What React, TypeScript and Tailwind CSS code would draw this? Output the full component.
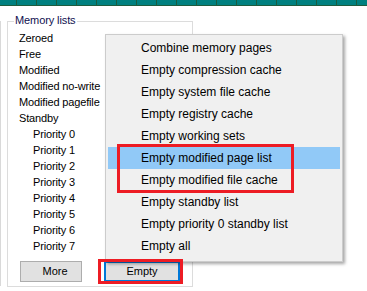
import React from "react";

const leftItems: { label: string; indent?: boolean }[] = [
  { label: "Zeroed" },
  { label: "Free" },
  { label: "Modified" },
  { label: "Modified no-write" },
  { label: "Modified pagefile" },
  { label: "Standby" },
  { label: "Priority 0", indent: true },
  { label: "Priority 1", indent: true },
  { label: "Priority 2", indent: true },
  { label: "Priority 3", indent: true },
  { label: "Priority 4", indent: true },
  { label: "Priority 5", indent: true },
  { label: "Priority 6", indent: true },
  { label: "Priority 7", indent: true },
];

const menuItems = [
  "Combine memory pages",
  "Empty compression cache",
  "Empty system file cache",
  "Empty registry cache",
  "Empty working sets",
  "Empty modified page list",
  "Empty modified file cache",
  "Empty standby list",
  "Empty priority 0 standby list",
  "Empty all",
];

export default function App() {
  const cells = Array.from({ length: 18 });
  return (
    <div className="relative w-[367px] h-[291px] overflow-hidden bg-white font-['Liberation_Sans',Arial,sans-serif] text-black">
      {/* top teal strip */}
      <div className="flex h-[6px] bg-[#008080] border-b border-[#1d5c3e]">
        <div className="w-[17px] h-full shrink-0 border-r border-[#1d5c3e]" />
        {cells.map((_, i) => (
          <div key={i} className="w-[20px] h-full shrink-0 border-r border-[#1d5c3e]" />
        ))}
      </div>

      <div className="flex pt-[15px]">
        <div className="w-px h-[265px] bg-[#d9d9d9]" />
        <div className="relative ml-[6px] w-[186px] h-[266px] border border-[#dcdcdc]">
          <span className="absolute -top-[9px] left-[6px] bg-white px-px text-[11px] leading-[14px] tracking-[-0.1px] text-[#101050]">
            Memory lists
          </span>
          <div className="pt-[8px] pl-[11px] text-[11px] leading-[16px] tracking-[-0.15px]">
            {leftItems.map((it) => (
              <div key={it.label} className={it.indent ? "pl-[14px]" : ""}>
                {it.label}
              </div>
            ))}
          </div>
          <div className="flex mt-[7px] pl-[12px]">
            <div className="flex items-center justify-center pl-[8px] w-[62px] h-[21px] border border-[#adadad] bg-[#e1e1e1] text-[11px]">
              More
            </div>
            <div className="ml-[22px] flex items-center justify-center w-[76px] h-[21px] border-2 border-[#0078d7] bg-[#e1e1e1] text-[11px]">
              Empty
            </div>
          </div>
        </div>
      </div>

      {/* popup menu */}
      <div className="absolute left-[105px] top-[34px] w-[238px] h-[228px] border border-[#cccccc] bg-[#f0f0f0] pt-[2px] shadow-[2px_2px_3px_rgba(0,0,0,0.35)]">
        {menuItems.map((m, i) => (
          <div
            key={m}
            className={
              "mx-[2px] h-[22px] flex items-center pl-[33px] text-[12px] " +
              (i === 5 ? "bg-[#91c9f7]" : "")
            }
          >
            {m}
          </div>
        ))}
      </div>

      {/* annotation boxes */}
      <div className="absolute left-[117px] top-[144px] w-[177px] h-[49px] border-[3px] border-[#ed1c24]" />
      <div className="absolute left-[98px] top-[259px] w-[85px] h-[25px] border-[3px] border-[#ed1c24]" />
    </div>
  );
}
